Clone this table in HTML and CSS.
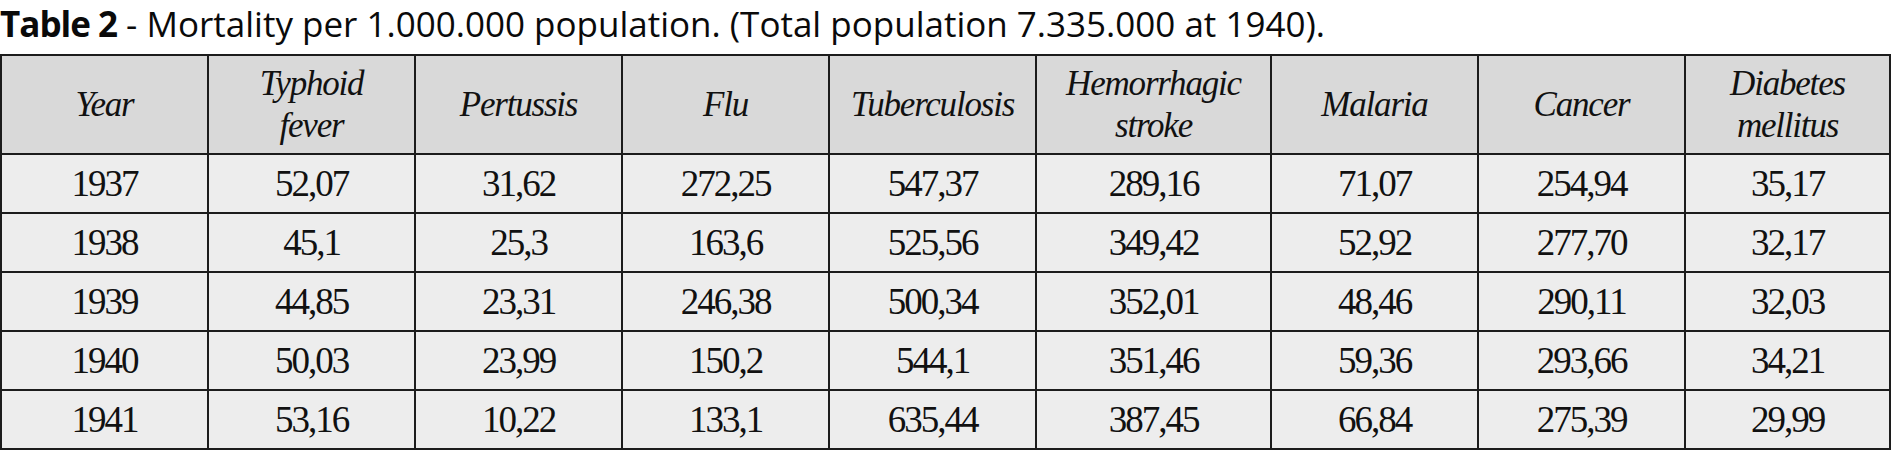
FILE: index.html
```html
<!DOCTYPE html>
<html lang="en">
<head>
<meta charset="utf-8">
<title>Table 2 - Mortality</title>
<link rel="stylesheet" href="styles.css">
</head>
<body>
<div class="caption"><b class="caption-label">Table 2</b> - Mortality per 1.000.000 population. (Total population 7.335.000 at 1940).</div>
<table class="data">
  <colgroup>
    <col class="col-std"><col class="col-std"><col class="col-std"><col class="col-std"><col class="col-std"><col class="col-wide"><col class="col-std"><col class="col-std"><col class="col-last">
  </colgroup>
  <thead>
    <tr class="head-row">
      <th>Year</th>
      <th>Typhoid<br>fever</th>
      <th>Pertussis</th>
      <th>Flu</th>
      <th>Tuberculosis</th>
      <th>Hemorrhagic<br>stroke</th>
      <th>Malaria</th>
      <th>Cancer</th>
      <th>Diabetes<br>mellitus</th>
    </tr>
  </thead>
  <tbody>
    <tr><td>1937</td><td>52,07</td><td>31,62</td><td>272,25</td><td>547,37</td><td>289,16</td><td>71,07</td><td>254,94</td><td>35,17</td></tr>
    <tr><td>1938</td><td>45,1</td><td>25,3</td><td>163,6</td><td>525,56</td><td>349,42</td><td>52,92</td><td>277,70</td><td>32,17</td></tr>
    <tr><td>1939</td><td>44,85</td><td>23,31</td><td>246,38</td><td>500,34</td><td>352,01</td><td>48,46</td><td>290,11</td><td>32,03</td></tr>
    <tr><td>1940</td><td>50,03</td><td>23,99</td><td>150,2</td><td>544,1</td><td>351,46</td><td>59,36</td><td>293,66</td><td>34,21</td></tr>
    <tr><td>1941</td><td>53,16</td><td>10,22</td><td>133,1</td><td>635,44</td><td>387,45</td><td>66,84</td><td>275,39</td><td>29,99</td></tr>
  </tbody>
</table>
</body>
</html>
```

FILE: styles.css
```css
html, body {
  margin: 0;
  padding: 0;
  background: #ffffff;
}

.caption {
  height: 48px;
  line-height: 48px;
  margin-bottom: 6px;
  font-family: "Open Sans", "Liberation Sans", sans-serif;
  font-size: 35px;
  color: #0a0a0a;
  white-space: nowrap;
}

.caption-label {
  font-weight: bold;
  letter-spacing: -1px;
}

.data {
  border-collapse: collapse;
  table-layout: fixed;
  width: 1890px;
  border: 2px solid #1c1c1c;
  font-family: "Liberation Serif", "Times New Roman", serif;
  color: #111111;
}

.col-std { width: 207px; }
.col-wide { width: 235px; }
.col-last { width: 205px; }

.data th,
.data td {
  border: 2px solid #1c1c1c;
  text-align: center;
  vertical-align: middle;
  padding: 0;
}

.data th {
  background: #d9d9d9;
  font-weight: normal;
  font-style: italic;
  font-size: 35px;
  line-height: 42px;
  letter-spacing: -1.2px;
}

.head-row {
  height: 99px;
}

.data td {
  background: #ededed;
  font-size: 37px;
  letter-spacing: -2px;
  height: 57px;
}
```
